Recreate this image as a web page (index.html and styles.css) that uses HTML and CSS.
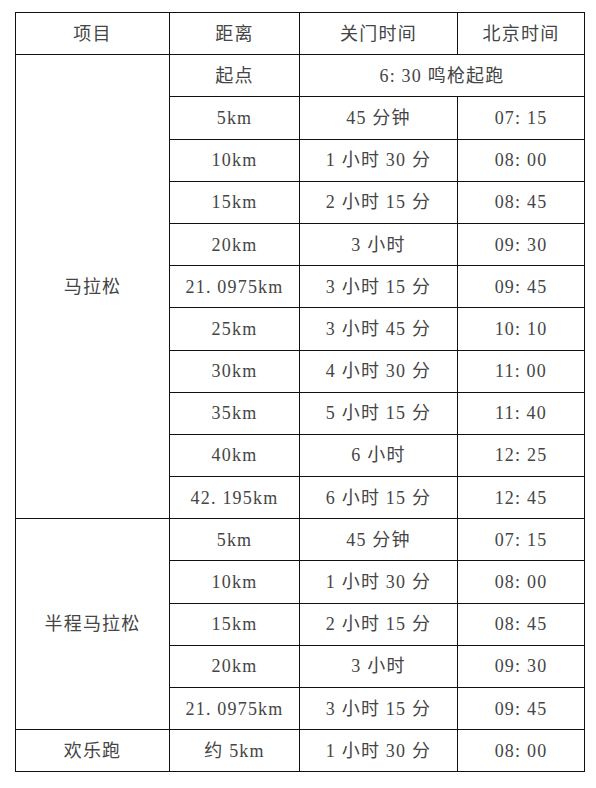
FILE: index.html
```html
<!DOCTYPE html>
<html lang="zh">
<head>
<meta charset="utf-8">
<title>关门时间</title>
<link rel="stylesheet" href="styles.css">
</head>
<body>
<div class="page">
<table class="sched">
<colgroup>
<col class="c1"><col class="c2"><col class="c3"><col class="c4">
</colgroup>
<thead>
<tr><th>项目</th><th>距离</th><th>关门时间</th><th>北京时间</th></tr>
</thead>
<tbody>
<tr><td rowspan="11">马拉松</td><td>起点</td><td colspan="2">6: 30 鸣枪起跑</td></tr>
<tr><td>5km</td><td>45 分钟</td><td>07: 15</td></tr>
<tr><td>10km</td><td>1 小时 30 分</td><td>08: 00</td></tr>
<tr><td>15km</td><td>2 小时 15 分</td><td>08: 45</td></tr>
<tr><td>20km</td><td>3 小时</td><td>09: 30</td></tr>
<tr><td>21. 0975km</td><td>3 小时 15 分</td><td>09: 45</td></tr>
<tr><td>25km</td><td>3 小时 45 分</td><td>10: 10</td></tr>
<tr><td>30km</td><td>4 小时 30 分</td><td>11: 00</td></tr>
<tr><td>35km</td><td>5 小时 15 分</td><td>11: 40</td></tr>
<tr><td>40km</td><td>6 小时</td><td>12: 25</td></tr>
<tr><td>42. 195km</td><td>6 小时 15 分</td><td>12: 45</td></tr>
<tr><td rowspan="5">半程马拉松</td><td>5km</td><td>45 分钟</td><td>07: 15</td></tr>
<tr><td>10km</td><td>1 小时 30 分</td><td>08: 00</td></tr>
<tr><td>15km</td><td>2 小时 15 分</td><td>08: 45</td></tr>
<tr><td>20km</td><td>3 小时</td><td>09: 30</td></tr>
<tr><td>21. 0975km</td><td>3 小时 15 分</td><td>09: 45</td></tr>
<tr><td>欢乐跑</td><td>约 5km</td><td>1 小时 30 分</td><td>08: 00</td></tr>
</tbody>
</table>
</div>
</body>
</html>
```
FILE: styles.css
```css
html, body {
  margin: 0;
  padding: 0;
  background: #ffffff;
}
.page {
  padding: 12px 0 0 15px;
}
.sched {
  border-collapse: collapse;
  table-layout: fixed;
  width: 569px;
  font-family: "Liberation Serif", "Noto Sans CJK SC", serif;
  font-size: 18px;
  color: #454545;
  letter-spacing: 1.2px;
}
.c1 { width: 154px; }
.c2 { width: 130px; }
.c3 { width: 158px; }
.c4 { width: 127px; }
.sched th,
.sched td {
  border: 1px solid #111;
  padding: 0;
  height: 41.2px;
  text-align: center;
  vertical-align: middle;
  font-weight: 400;
  line-height: 1;
}
```
